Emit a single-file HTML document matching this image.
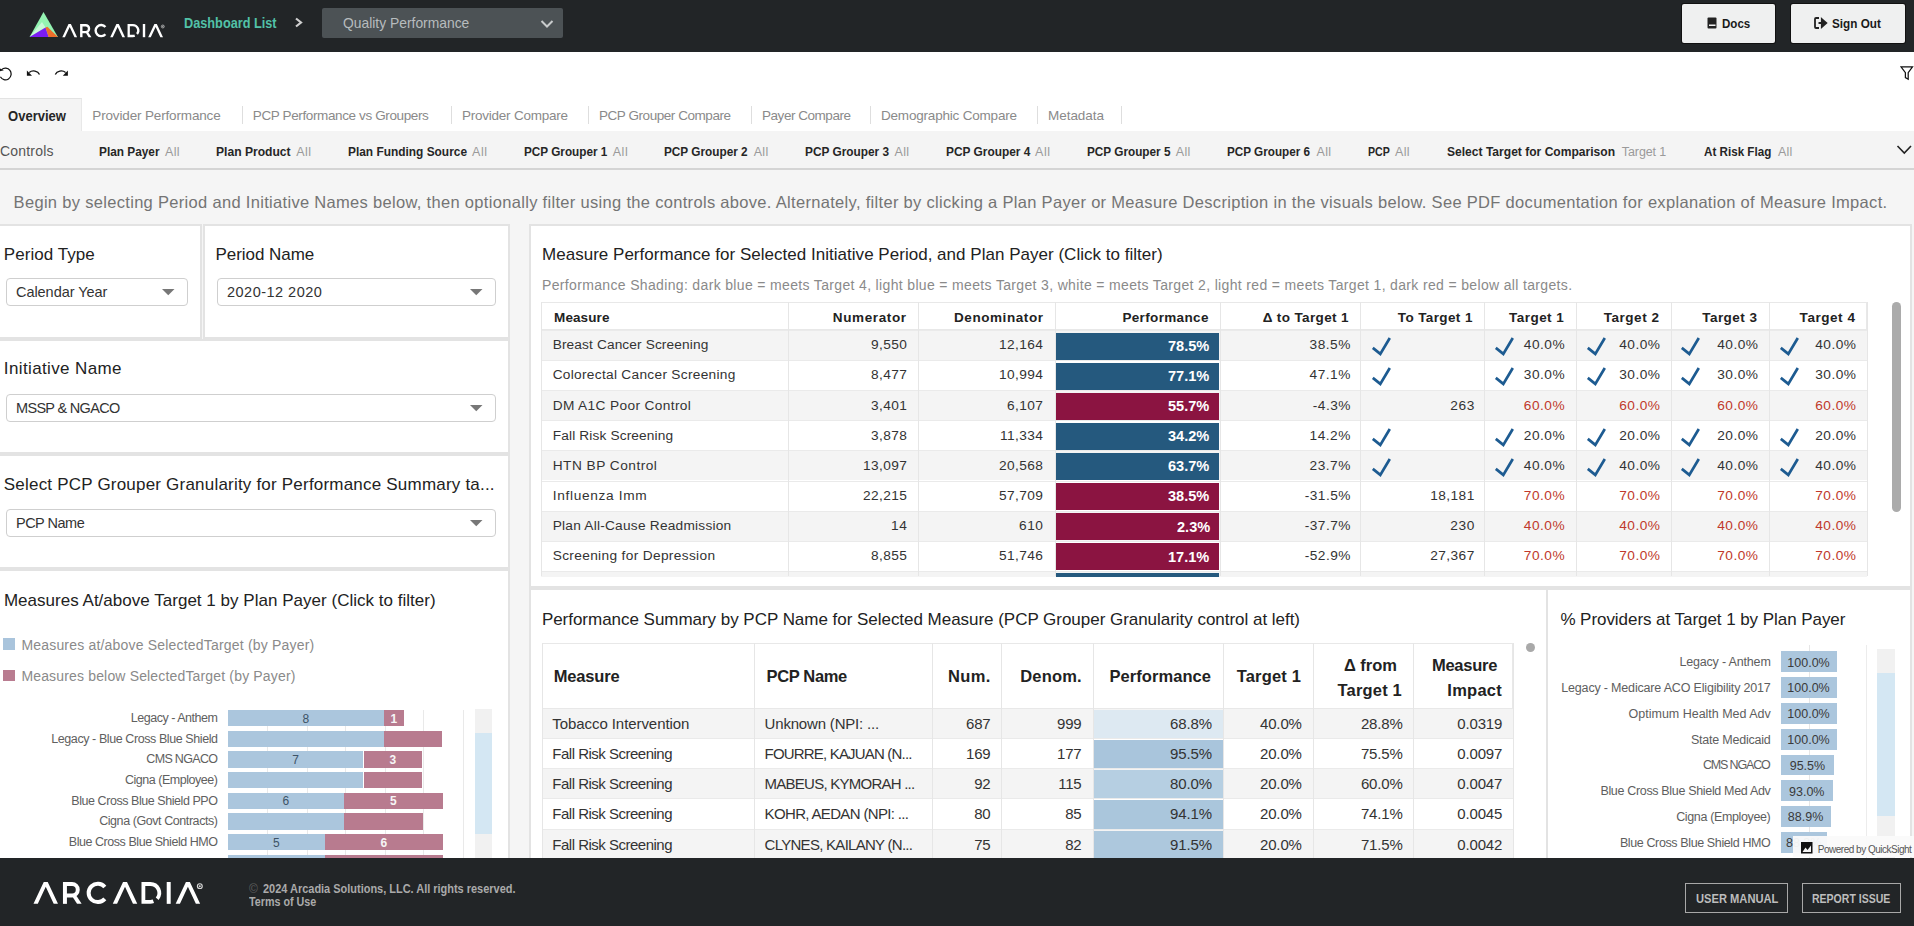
<!DOCTYPE html><html><head><meta charset="utf-8"><style>
html,body{margin:0;padding:0;width:1914px;height:926px;overflow:hidden;background:#f4f4f4;position:relative;font-family:"Liberation Sans",sans-serif;}
.t{position:absolute;white-space:nowrap;}
.r{position:absolute;}
</style></head><body>
<div class="r" style="left:0px;top:0px;width:1914px;height:52px;background:#222527;"></div>
<svg class="r" style="left:0;top:0" width="70" height="52"><polygon points="43.5,11.9 29.6,36.9 57.9,36.9" fill="#94f3b2"/><polygon points="42,22 29.6,36.9 45.5,27.5" fill="#c9f9d9"/><polygon points="29.6,36.9 45.5,27.5 48.7,36.9" fill="#7a1cf2"/><polygon points="45.5,27.5 47.4,26.8 57.9,36.9 48.7,36.9" fill="#ee6e2b"/></svg>
<svg class="r" style="left:62px;top:23.5px;overflow:visible" width="104" height="14" viewBox="0 0 104 14"><polygon points="0.3,13.2 6.5,0 8.9,0 15.1,13.2 12.5,13.2 7.7,2.9 2.9,13.2" fill="#fff"/><polygon points="48.199999999999996,13.2 54.4,0 56.8,0 63.0,13.2 60.4,13.2 55.6,2.9 50.8,13.2" fill="#fff"/><polygon points="86.2,13.2 92.4,0 94.80000000000001,0 101.0,13.2 98.4,13.2 93.60000000000001,2.9 88.80000000000001,13.2" fill="#fff"/><rect x="18.1" y="0" width="2.4" height="13.2" fill="#fff"/><path d="M19.3,1.2 H23.6 A3.45,3.45 0 0 1 23.6,8.1 H19.3" fill="none" stroke="#fff" stroke-width="2.4"/><polygon points="23.2,7.8 25.9,7.8 29.4,13.2 26.6,13.2" fill="#fff"/><path d="M43.4,3.0 A5.55,5.55 0 1 0 43.4,10.2" fill="none" stroke="#fff" stroke-width="2.4"/><path d="M66.7,0 V13.2 M66.7,1.2 H70.9 A5.4,5.4 0 0 1 75.04,10.07 M72.75,11.67 A5.4,5.4 0 0 1 70.9,12 H66.7" fill="none" stroke="#fff" stroke-width="2.3"/><rect x="80.8" y="0" width="2.4" height="13.2" fill="#fff"/><circle cx="100.8" cy="2.5" r="1.45" fill="none" stroke="#d8d8d8" stroke-width="0.7"/><circle cx="100.8" cy="2.5" r="0.6" fill="#d8d8d8"/></svg>
<div class="t" style="left:184.00px;top:15.20px;font-size:15px;line-height:15px;color:#52c2a8;transform-origin:0 0;transform:scaleX(0.8481);font-weight:bold;">Dashboard List</div>
<svg class="r" style="left:294px;top:17px" width="10" height="11"><path d="M2,1.5 L7,5.5 L2,9.5" fill="none" stroke="#d0d0d0" stroke-width="2.2"/></svg>
<div class="r" style="left:322px;top:8px;width:241px;height:30px;background:#4c5255;border-radius:2px;"></div>
<div class="t" style="left:342.50px;top:15.40px;font-size:15px;line-height:15px;color:#b7bcbe;transform-origin:0 0;transform:scaleX(0.9238);">Quality Performance</div>
<svg class="r" style="left:540px;top:19px" width="14" height="10"><path d="M1.5,2 L7,7.5 L12.5,2" fill="none" stroke="#c8cbcc" stroke-width="2"/></svg>
<div class="r" style="left:1682px;top:4px;width:93px;height:39px;background:#eff0f0;border-radius:2px;box-shadow:0 0 0 1px #111;"></div>
<svg class="r" style="left:1707px;top:17px" width="10" height="12"><rect x="0.5" y="0.5" width="9" height="11" rx="1" fill="#222"/><rect x="2" y="7.5" width="6.5" height="1.5" fill="#f2f2f2"/></svg>
<div class="t" style="left:1721.80px;top:16.57px;font-size:13.5px;line-height:13.5px;color:#1a1a1a;transform-origin:0 0;transform:scaleX(0.8572);font-weight:bold;">Docs</div>
<div class="r" style="left:1791px;top:4px;width:114px;height:39px;background:#eff0f0;border-radius:2px;box-shadow:0 0 0 1px #111;"></div>
<svg class="r" style="left:1814px;top:17px" width="14" height="12"><path d="M5,1 H2 Q1,1 1,2 V10 Q1,11 2,11 H5" fill="none" stroke="#222" stroke-width="1.8"/><path d="M4.5,6 H9 M8,2.5 L12,6 L8,9.5 Z" fill="#222" stroke="#222" stroke-width="2.2"/></svg>
<div class="t" style="left:1831.60px;top:16.57px;font-size:13.5px;line-height:13.5px;color:#1a1a1a;transform-origin:0 0;transform:scaleX(0.8677);font-weight:bold;">Sign Out</div>
<div class="r" style="left:0px;top:52px;width:1914px;height:46px;background:#fff;"></div>
<svg class="r" style="left:0;top:0" width="80" height="90"><path d="M1.6,69.6 A5.7,5.9 0 1 1 0.4,76.8" fill="none" stroke="#111" stroke-width="1.25"/><polygon points="-0.5,68.2 3.9,70.2 -0.5,71.4" fill="#111"/><path d="M39.5,74.6 A6.4,5.6 0 0 0 29.2,72.4" fill="none" stroke="#111" stroke-width="1.3"/><polygon points="26.9,70.6 26.9,75.7 32,75.7" fill="#111"/><path d="M55.3,74.6 A6.4,5.6 0 0 1 65.6,72.4" fill="none" stroke="#111" stroke-width="1.3"/><polygon points="67.9,70.6 67.9,75.7 62.8,75.7" fill="#111"/></svg>
<svg class="r" style="left:1900px;top:66px" width="14" height="15"><path d="M1,0.8 H12.5 L8.2,6.6 V13.2 L5.4,11.6 V6.6 Z" fill="none" stroke="#111" stroke-width="1.25"/></svg>
<div class="r" style="left:0px;top:98px;width:1914px;height:33px;background:#fff;"></div>
<div class="r" style="left:0px;top:98px;width:82px;height:33px;background:#f4f4f4;border-top:1px solid #e3e3e3;border-right:1px solid #e8e8e8;box-sizing:border-box;"></div>
<div class="t" style="left:7.50px;top:108.65px;font-size:14px;line-height:14px;color:#262626;transform-origin:0 0;transform:scaleX(0.9316);font-weight:bold;">Overview</div>
<div class="t" style="left:92.30px;top:109.07px;font-size:13.5px;line-height:13.5px;color:#8a8a8a;letter-spacing:-0.153px;">Provider Performance</div>
<div class="r" style="left:242px;top:106px;width:1px;height:18px;background:#dedede;"></div>
<div class="t" style="left:252.80px;top:109.07px;font-size:13.5px;line-height:13.5px;color:#8a8a8a;letter-spacing:-0.378px;">PCP Performance vs Groupers</div>
<div class="r" style="left:451px;top:106px;width:1px;height:18px;background:#dedede;"></div>
<div class="t" style="left:462.00px;top:109.07px;font-size:13.5px;line-height:13.5px;color:#8a8a8a;letter-spacing:-0.236px;">Provider Compare</div>
<div class="r" style="left:588px;top:106px;width:1px;height:18px;background:#dedede;"></div>
<div class="t" style="left:599.00px;top:109.07px;font-size:13.5px;line-height:13.5px;color:#8a8a8a;letter-spacing:-0.448px;">PCP Grouper Compare</div>
<div class="r" style="left:751px;top:106px;width:1px;height:18px;background:#dedede;"></div>
<div class="t" style="left:762.00px;top:109.07px;font-size:13.5px;line-height:13.5px;color:#8a8a8a;letter-spacing:-0.462px;">Payer Compare</div>
<div class="r" style="left:870px;top:106px;width:1px;height:18px;background:#dedede;"></div>
<div class="t" style="left:881.00px;top:109.07px;font-size:13.5px;line-height:13.5px;color:#8a8a8a;letter-spacing:-0.198px;">Demographic Compare</div>
<div class="r" style="left:1037px;top:106px;width:1px;height:18px;background:#dedede;"></div>
<div class="t" style="left:1048.00px;top:109.07px;font-size:13.5px;line-height:13.5px;color:#8a8a8a;letter-spacing:-0.041px;">Metadata</div>
<div class="r" style="left:1121px;top:106px;width:1px;height:18px;background:#dedede;"></div>
<div class="r" style="left:0px;top:131px;width:1914px;height:37px;background:#f4f4f4;"></div>
<div class="r" style="left:0px;top:168px;width:1914px;height:2px;background:#d4d4d4;"></div>
<div class="t" style="left:0.00px;top:144.15px;font-size:14px;line-height:14px;color:#555;letter-spacing:0.195px;">Controls</div>
<div class="t" style="left:99.00px;top:144.70px;font-size:13px;line-height:13px;color:#262626;transform-origin:0 0;transform:scaleX(0.9100);font-weight:bold;">Plan Payer</div>
<div class="t" style="left:165.00px;top:145.72px;font-size:12.5px;line-height:12.5px;color:#9a9a9a;letter-spacing:0.354px;">All</div>
<div class="t" style="left:216.40px;top:144.70px;font-size:13px;line-height:13px;color:#262626;transform-origin:0 0;transform:scaleX(0.9304);font-weight:bold;">Plan Product</div>
<div class="t" style="left:296.30px;top:145.72px;font-size:12.5px;line-height:12.5px;color:#9a9a9a;letter-spacing:0.404px;">All</div>
<div class="t" style="left:347.80px;top:144.70px;font-size:13px;line-height:13px;color:#262626;transform-origin:0 0;transform:scaleX(0.9153);font-weight:bold;">Plan Funding Source</div>
<div class="t" style="left:472.00px;top:145.72px;font-size:12.5px;line-height:12.5px;color:#9a9a9a;letter-spacing:0.554px;">All</div>
<div class="t" style="left:523.70px;top:144.70px;font-size:13px;line-height:13px;color:#262626;transform-origin:0 0;transform:scaleX(0.9031);font-weight:bold;">PCP Grouper 1</div>
<div class="t" style="left:612.70px;top:145.72px;font-size:12.5px;line-height:12.5px;color:#9a9a9a;letter-spacing:0.554px;">All</div>
<div class="t" style="left:664.40px;top:144.70px;font-size:13px;line-height:13px;color:#262626;transform-origin:0 0;transform:scaleX(0.9064);font-weight:bold;">PCP Grouper 2</div>
<div class="t" style="left:753.70px;top:145.72px;font-size:12.5px;line-height:12.5px;color:#9a9a9a;letter-spacing:0.304px;">All</div>
<div class="t" style="left:804.90px;top:144.70px;font-size:13px;line-height:13px;color:#262626;transform-origin:0 0;transform:scaleX(0.9107);font-weight:bold;">PCP Grouper 3</div>
<div class="t" style="left:894.60px;top:145.72px;font-size:12.5px;line-height:12.5px;color:#9a9a9a;letter-spacing:0.304px;">All</div>
<div class="t" style="left:945.70px;top:144.70px;font-size:13px;line-height:13px;color:#262626;transform-origin:0 0;transform:scaleX(0.9140);font-weight:bold;">PCP Grouper 4</div>
<div class="t" style="left:1035.00px;top:145.72px;font-size:12.5px;line-height:12.5px;color:#9a9a9a;letter-spacing:0.554px;">All</div>
<div class="t" style="left:1086.50px;top:144.70px;font-size:13px;line-height:13px;color:#262626;transform-origin:0 0;transform:scaleX(0.9053);font-weight:bold;">PCP Grouper 5</div>
<div class="t" style="left:1175.80px;top:145.72px;font-size:12.5px;line-height:12.5px;color:#9a9a9a;letter-spacing:0.304px;">All</div>
<div class="t" style="left:1227.00px;top:144.70px;font-size:13px;line-height:13px;color:#262626;transform-origin:0 0;transform:scaleX(0.8999);font-weight:bold;">PCP Grouper 6</div>
<div class="t" style="left:1316.50px;top:145.72px;font-size:12.5px;line-height:12.5px;color:#9a9a9a;letter-spacing:0.304px;">All</div>
<div class="t" style="left:1367.60px;top:144.70px;font-size:13px;line-height:13px;color:#262626;transform-origin:0 0;transform:scaleX(0.8155);font-weight:bold;">PCP</div>
<div class="t" style="left:1395.00px;top:145.72px;font-size:12.5px;line-height:12.5px;color:#9a9a9a;letter-spacing:0.304px;">All</div>
<div class="t" style="left:1447.00px;top:144.70px;font-size:13px;line-height:13px;color:#262626;transform-origin:0 0;transform:scaleX(0.9278);font-weight:bold;">Select Target for Comparison</div>
<div class="t" style="left:1621.80px;top:145.72px;font-size:12.5px;line-height:12.5px;color:#9a9a9a;letter-spacing:-0.095px;">Target 1</div>
<div class="t" style="left:1704.40px;top:144.70px;font-size:13px;line-height:13px;color:#262626;transform-origin:0 0;transform:scaleX(0.8958);font-weight:bold;">At Risk Flag</div>
<div class="t" style="left:1778.00px;top:145.72px;font-size:12.5px;line-height:12.5px;color:#9a9a9a;letter-spacing:0.254px;">All</div>
<svg class="r" style="left:1896px;top:144px" width="17" height="12"><path d="M1.5,2 L8.3,9 L15,2" fill="none" stroke="#222" stroke-width="1.6"/></svg>
<div class="r" style="left:0px;top:170px;width:1914px;height:688px;background:#f5f5f5;"></div>
<div class="t" style="left:13.60px;top:193.53px;font-size:16.5px;line-height:16.5px;color:#747474;letter-spacing:0.311px;">Begin by selecting Period and Initiative Names below, then optionally filter using the controls above. Alternately, filter by clicking a Plan Payer or Measure Description in the visuals below. See PDF documentation for explanation of Measure Impact.</div>
<div class="r" style="left:-2px;top:224px;width:204px;height:115px;background:#fff;border:2px solid #e3e3e3;box-sizing:border-box;"></div>
<div class="r" style="left:202.5px;top:224px;width:307.5px;height:115px;background:#fff;border:2px solid #e3e3e3;box-sizing:border-box;"></div>
<div class="t" style="left:3.80px;top:245.91px;font-size:17px;line-height:17px;color:#222;letter-spacing:0.058px;">Period Type</div>
<div class="r" style="left:6px;top:278px;width:182px;height:28px;background:#fff;border:1.5px solid #cfcfcf;border-radius:4px;box-sizing:border-box;"></div>
<div class="t" style="left:16.00px;top:285.03px;font-size:14.5px;line-height:14.5px;color:#333;letter-spacing:-0.051px;">Calendar Year</div>
<svg class="r" style="left:162px;top:289px" width="13" height="7"><path d="M0,0 H12.5 L6.25,6.2 Z" fill="#777"/></svg>
<div class="t" style="left:215.50px;top:245.91px;font-size:17px;line-height:17px;color:#222;letter-spacing:-0.041px;">Period Name</div>
<div class="r" style="left:217px;top:278px;width:279px;height:28px;background:#fff;border:1.5px solid #cfcfcf;border-radius:4px;box-sizing:border-box;"></div>
<div class="t" style="left:227.00px;top:285.03px;font-size:14.5px;line-height:14.5px;color:#333;letter-spacing:0.482px;">2020-12 2020</div>
<svg class="r" style="left:470px;top:289px" width="13" height="7"><path d="M0,0 H12.5 L6.25,6.2 Z" fill="#777"/></svg>
<div class="r" style="left:-2px;top:339px;width:512px;height:115px;background:#fff;border:2px solid #e3e3e3;box-sizing:border-box;"></div>
<div class="t" style="left:3.80px;top:360.41px;font-size:17px;line-height:17px;color:#222;letter-spacing:0.376px;">Initiative Name</div>
<div class="r" style="left:6px;top:393.5px;width:490px;height:28.0px;background:#fff;border:1.5px solid #cfcfcf;border-radius:4px;box-sizing:border-box;"></div>
<div class="t" style="left:16.00px;top:400.53px;font-size:14.5px;line-height:14.5px;color:#333;letter-spacing:-0.685px;">MSSP &amp; NGACO</div>
<svg class="r" style="left:470px;top:404.5px" width="13" height="7"><path d="M0,0 H12.5 L6.25,6.2 Z" fill="#777"/></svg>
<div class="r" style="left:-2px;top:454px;width:512px;height:115px;background:#fff;border:2px solid #e3e3e3;box-sizing:border-box;"></div>
<div class="t" style="left:3.80px;top:475.61px;font-size:17px;line-height:17px;color:#222;letter-spacing:0.205px;">Select PCP Grouper Granularity for Performance Summary ta...</div>
<div class="r" style="left:6px;top:508.5px;width:490px;height:28.0px;background:#fff;border:1.5px solid #cfcfcf;border-radius:4px;box-sizing:border-box;"></div>
<div class="t" style="left:16.00px;top:515.53px;font-size:14.5px;line-height:14.5px;color:#333;letter-spacing:-0.509px;">PCP Name</div>
<svg class="r" style="left:470px;top:519.5px" width="13" height="7"><path d="M0,0 H12.5 L6.25,6.2 Z" fill="#777"/></svg>
<div class="r" style="left:-2px;top:569px;width:512px;height:331px;background:#fff;border:2px solid #e3e3e3;box-sizing:border-box;"></div>
<div class="t" style="left:3.90px;top:591.91px;font-size:17px;line-height:17px;color:#222;letter-spacing:0.022px;">Measures At/above Target 1 by Plan Payer (Click to filter)</div>
<div class="r" style="left:3.2px;top:638px;width:11.8px;height:11.5px;background:#a9c4dc;"></div>
<div class="t" style="left:21.40px;top:637.55px;font-size:14px;line-height:14px;color:#8a8a8a;letter-spacing:0.190px;">Measures at/above SelectedTarget (by Payer)</div>
<div class="r" style="left:3.2px;top:669.5px;width:11.8px;height:11.5px;background:#b97c90;"></div>
<div class="t" style="left:21.40px;top:668.65px;font-size:14px;line-height:14px;color:#8a8a8a;letter-spacing:0.162px;">Measures below SelectedTarget (by Payer)</div>
<div class="r" style="left:0;top:700px;width:510px;height:158px;overflow:hidden">
<div class="r" style="left:266.6px;top:10px;width:1px;height:160px;background:#e9e9e9"></div>
<div class="r" style="left:306.8px;top:10px;width:1px;height:160px;background:#e9e9e9"></div>
<div class="r" style="left:345px;top:10px;width:1px;height:160px;background:#e9e9e9"></div>
<div class="r" style="left:384.5px;top:10px;width:1px;height:160px;background:#e9e9e9"></div>
<div class="r" style="left:422.7px;top:10px;width:1px;height:160px;background:#e9e9e9"></div>
<div class="r" style="left:462.6px;top:10px;width:1px;height:160px;background:#e9e9e9"></div>
<div class="r" style="left:227.7px;top:10.00px;width:156.2px;height:16.4px;background:#abc6dd"></div>
<div class="r" style="left:383.9px;top:10.00px;width:20.1px;height:16.4px;background:#b87b8f"></div>
<div class="r" style="left:227.7px;top:30.67px;width:156.2px;height:16.4px;background:#abc6dd"></div>
<div class="r" style="left:383.9px;top:30.67px;width:58.6px;height:16.4px;background:#b87b8f"></div>
<div class="r" style="left:227.7px;top:51.34px;width:135.8px;height:16.4px;background:#abc6dd"></div>
<div class="r" style="left:363.5px;top:51.34px;width:58.5px;height:16.4px;background:#b87b8f"></div>
<div class="r" style="left:227.7px;top:72.01px;width:135.8px;height:16.4px;background:#abc6dd"></div>
<div class="r" style="left:363.5px;top:72.01px;width:58.5px;height:16.4px;background:#b87b8f"></div>
<div class="r" style="left:227.7px;top:92.68px;width:116.3px;height:16.4px;background:#abc6dd"></div>
<div class="r" style="left:344px;top:92.68px;width:98.5px;height:16.4px;background:#b87b8f"></div>
<div class="r" style="left:227.7px;top:113.35px;width:116.3px;height:16.4px;background:#abc6dd"></div>
<div class="r" style="left:344px;top:113.35px;width:78.7px;height:16.4px;background:#b87b8f"></div>
<div class="r" style="left:227.7px;top:134.02px;width:97.3px;height:16.4px;background:#abc6dd"></div>
<div class="r" style="left:325px;top:134.02px;width:117.5px;height:16.4px;background:#b87b8f"></div>
<div class="r" style="left:227.7px;top:154.69px;width:97.3px;height:16.4px;background:#abc6dd"></div>
<div class="r" style="left:325px;top:154.69px;width:117.5px;height:16.4px;background:#b87b8f"></div>
</div>
<div class="t" style="left:130.76px;top:712.02px;font-size:12.5px;line-height:12.5px;color:#606060;letter-spacing:-0.469px;">Legacy - Anthem</div>
<div class="t" style="left:302.46px;top:712.64px;font-size:12px;line-height:12px;color:#3d5366;">8</div>
<div class="t" style="left:390.61px;top:712.64px;font-size:12px;line-height:12px;color:#f6f6f6;font-weight:bold;">1</div>
<div class="t" style="left:51.28px;top:732.69px;font-size:12.5px;line-height:12.5px;color:#606060;letter-spacing:-0.418px;">Legacy - Blue Cross Blue Shield</div>
<div class="t" style="left:146.31px;top:753.36px;font-size:12.5px;line-height:12.5px;color:#606060;letter-spacing:-0.675px;">CMS NGACO</div>
<div class="t" style="left:292.26px;top:753.98px;font-size:12px;line-height:12px;color:#3d5366;">7</div>
<div class="t" style="left:389.41px;top:753.98px;font-size:12px;line-height:12px;color:#f6f6f6;font-weight:bold;">3</div>
<div class="t" style="left:124.96px;top:774.03px;font-size:12.5px;line-height:12.5px;color:#606060;letter-spacing:-0.467px;">Cigna (Employee)</div>
<div class="t" style="left:71.32px;top:794.70px;font-size:12.5px;line-height:12.5px;color:#606060;letter-spacing:-0.442px;">Blue Cross Blue Shield PPO</div>
<div class="t" style="left:282.51px;top:795.32px;font-size:12px;line-height:12px;color:#3d5366;">6</div>
<div class="t" style="left:389.91px;top:795.32px;font-size:12px;line-height:12px;color:#f6f6f6;font-weight:bold;">5</div>
<div class="t" style="left:99.13px;top:815.37px;font-size:12.5px;line-height:12.5px;color:#606060;letter-spacing:-0.426px;">Cigna (Govt Contracts)</div>
<div class="t" style="left:68.75px;top:836.04px;font-size:12.5px;line-height:12.5px;color:#606060;letter-spacing:-0.449px;">Blue Cross Blue Shield HMO</div>
<div class="t" style="left:273.01px;top:836.66px;font-size:12px;line-height:12px;color:#3d5366;">5</div>
<div class="t" style="left:380.41px;top:836.66px;font-size:12px;line-height:12px;color:#f6f6f6;font-weight:bold;">6</div>
<div class="t" style="left:50.64px;top:856.71px;font-size:12.5px;line-height:12.5px;color:#606060;letter-spacing:-0.434px;">Blue Cross Blue Shield Med Adv</div>
<div class="r" style="left:474.6px;top:709px;width:17.099999999999966px;height:149px;background:#f1f1f1;"></div>
<div class="r" style="left:474.6px;top:733px;width:17.099999999999966px;height:101px;background:#d4e7f3;"></div>
<div class="r" style="left:529px;top:224px;width:1383px;height:364px;background:#fff;border:2px solid #e3e3e3;box-sizing:border-box;"></div>
<div class="t" style="left:542.00px;top:245.81px;font-size:17px;line-height:17px;color:#222;letter-spacing:0.021px;">Measure Performance for Selected Initiative Period, and Plan Payer (Click to filter)</div>
<div class="t" style="left:542.00px;top:278.35px;font-size:14px;line-height:14px;color:#8a8a8a;letter-spacing:0.342px;">Performance Shading: dark blue = meets Target 4, light blue = meets Target 3, white = meets Target 2, light red = meets Target 1, dark red = below all targets.</div>
<div class="r" style="left:0;top:0;width:1914px;height:577px;overflow:hidden">
<div class="r" style="left:541.4px;top:302.2px;width:1325.4px;height:27.80000000000001px;background:#fff;border:1px solid #e8e8e8;box-sizing:border-box;"></div>
<div class="r" style="left:541.4px;top:330.0px;width:1325.4px;height:30.100000000000023px;background:#f4f4f4;"></div>
<div class="r" style="left:541.4px;top:330.0px;width:1325.4px;height:1.0px;background:#eaeaea;"></div>
<div class="r" style="left:1055.8px;top:332.5px;width:163.70000000000005px;height:27.30000000000001px;background:#25597e;"></div>
<div class="r" style="left:541.4px;top:360.1px;width:1325.4px;height:30.100000000000023px;background:#fff;"></div>
<div class="r" style="left:541.4px;top:360.1px;width:1325.4px;height:1.0px;background:#eaeaea;"></div>
<div class="r" style="left:1055.8px;top:362.6px;width:163.70000000000005px;height:27.30000000000001px;background:#25597e;"></div>
<div class="r" style="left:541.4px;top:390.2px;width:1325.4px;height:30.100000000000023px;background:#f4f4f4;"></div>
<div class="r" style="left:541.4px;top:390.2px;width:1325.4px;height:1.0px;background:#eaeaea;"></div>
<div class="r" style="left:1055.8px;top:392.7px;width:163.70000000000005px;height:27.30000000000001px;background:#8b1441;"></div>
<div class="r" style="left:541.4px;top:420.3px;width:1325.4px;height:30.100000000000023px;background:#fff;"></div>
<div class="r" style="left:541.4px;top:420.3px;width:1325.4px;height:1.0px;background:#eaeaea;"></div>
<div class="r" style="left:1055.8px;top:422.8px;width:163.70000000000005px;height:27.30000000000001px;background:#25597e;"></div>
<div class="r" style="left:541.4px;top:450.4px;width:1325.4px;height:30.100000000000023px;background:#f4f4f4;"></div>
<div class="r" style="left:541.4px;top:450.4px;width:1325.4px;height:1.0px;background:#eaeaea;"></div>
<div class="r" style="left:1055.8px;top:452.9px;width:163.70000000000005px;height:27.30000000000001px;background:#25597e;"></div>
<div class="r" style="left:541.4px;top:480.5px;width:1325.4px;height:30.100000000000023px;background:#fff;"></div>
<div class="r" style="left:541.4px;top:480.5px;width:1325.4px;height:1.0px;background:#eaeaea;"></div>
<div class="r" style="left:1055.8px;top:483.0px;width:163.70000000000005px;height:27.30000000000001px;background:#8b1441;"></div>
<div class="r" style="left:541.4px;top:510.6px;width:1325.4px;height:30.100000000000023px;background:#f4f4f4;"></div>
<div class="r" style="left:541.4px;top:510.6px;width:1325.4px;height:1.0px;background:#eaeaea;"></div>
<div class="r" style="left:1055.8px;top:513.1px;width:163.70000000000005px;height:27.300000000000068px;background:#8b1441;"></div>
<div class="r" style="left:541.4px;top:540.7px;width:1325.4px;height:30.100000000000023px;background:#fff;"></div>
<div class="r" style="left:541.4px;top:540.7px;width:1325.4px;height:1.0px;background:#eaeaea;"></div>
<div class="r" style="left:1055.8px;top:543.2px;width:163.70000000000005px;height:27.300000000000068px;background:#8b1441;"></div>
<div class="r" style="left:541.4px;top:570.8px;width:1325.4px;height:30.100000000000023px;background:#f4f4f4;"></div>
<div class="r" style="left:541.4px;top:570.8px;width:1325.4px;height:1.0px;background:#eaeaea;"></div>
<div class="r" style="left:1055.8px;top:573.3px;width:163.70000000000005px;height:27.300000000000068px;background:#25597e;"></div>
<div class="r" style="left:541.4px;top:302.2px;width:1.0px;height:274.3px;background:#e6e6e6;"></div>
<div class="r" style="left:787.7px;top:302.2px;width:1.0px;height:274.3px;background:#e6e6e6;"></div>
<div class="r" style="left:917.6px;top:302.2px;width:1.0px;height:274.3px;background:#e6e6e6;"></div>
<div class="r" style="left:1054.7px;top:302.2px;width:1.0px;height:274.3px;background:#e6e6e6;"></div>
<div class="r" style="left:1219.8px;top:302.2px;width:1.0px;height:274.3px;background:#e6e6e6;"></div>
<div class="r" style="left:1360.4px;top:302.2px;width:1.0px;height:274.3px;background:#e6e6e6;"></div>
<div class="r" style="left:1484.3px;top:302.2px;width:1.0px;height:274.3px;background:#e6e6e6;"></div>
<div class="r" style="left:1575.7px;top:302.2px;width:1.0px;height:274.3px;background:#e6e6e6;"></div>
<div class="r" style="left:1670.9px;top:302.2px;width:1.0px;height:274.3px;background:#e6e6e6;"></div>
<div class="r" style="left:1769.4px;top:302.2px;width:1.0px;height:274.3px;background:#e6e6e6;"></div>
<div class="r" style="left:1866.8px;top:302.2px;width:1.0px;height:274.3px;background:#e6e6e6;"></div>
</div>
<div class="t" style="left:554.10px;top:310.67px;font-size:13.5px;line-height:13.5px;color:#222;letter-spacing:0.087px;font-weight:bold;">Measure</div>
<div class="t" style="left:832.80px;top:310.67px;font-size:13.5px;line-height:13.5px;color:#222;letter-spacing:0.617px;font-weight:bold;">Numerator</div>
<div class="t" style="left:954.00px;top:310.67px;font-size:13.5px;line-height:13.5px;color:#222;letter-spacing:0.574px;font-weight:bold;">Denominator</div>
<div class="t" style="left:1122.40px;top:310.67px;font-size:13.5px;line-height:13.5px;color:#222;letter-spacing:0.346px;font-weight:bold;">Performance</div>
<div class="t" style="left:1262.70px;top:310.67px;font-size:13.5px;line-height:13.5px;color:#222;letter-spacing:0.361px;font-weight:bold;">Δ to Target 1</div>
<div class="t" style="left:1397.80px;top:310.67px;font-size:13.5px;line-height:13.5px;color:#222;letter-spacing:0.384px;font-weight:bold;">To Target 1</div>
<div class="t" style="left:1509.00px;top:310.67px;font-size:13.5px;line-height:13.5px;color:#222;letter-spacing:0.469px;font-weight:bold;">Target 1</div>
<div class="t" style="left:1603.70px;top:310.67px;font-size:13.5px;line-height:13.5px;color:#222;letter-spacing:0.541px;font-weight:bold;">Target 2</div>
<div class="t" style="left:1702.20px;top:310.67px;font-size:13.5px;line-height:13.5px;color:#222;letter-spacing:0.469px;font-weight:bold;">Target 3</div>
<div class="t" style="left:1799.60px;top:310.67px;font-size:13.5px;line-height:13.5px;color:#222;letter-spacing:0.541px;font-weight:bold;">Target 4</div>
<div class="t" style="left:552.70px;top:338.30px;font-size:13.7px;line-height:13.7px;color:#333;letter-spacing:0.120px;">Breast Cancer Screening</div>
<div class="t" style="left:871.00px;top:338.30px;font-size:13.7px;line-height:13.7px;color:#333;letter-spacing:0.429px;">9,550</div>
<div class="t" style="left:999.00px;top:338.30px;font-size:13.7px;line-height:13.7px;color:#333;letter-spacing:0.419px;">12,164</div>
<div class="t" style="left:1168.49px;top:337.98px;font-size:15.5px;line-height:15.5px;color:#fff;transform-origin:0 0;transform:scaleX(0.9400);font-weight:bold;">78.5%</div>
<div class="t" style="left:1309.61px;top:338.30px;font-size:13.7px;line-height:13.7px;color:#333;letter-spacing:0.486px;">38.5%</div>
<svg class="r" style="left:1369.5px;top:335.3px" width="24" height="22"><path d="M2.8,12.9 L10.3,18.9 L19.8,3" fill="none" stroke="#1d5b91" stroke-width="2.7" stroke-linecap="butt" stroke-linejoin="miter"/></svg>
<div class="t" style="left:1523.80px;top:338.30px;font-size:13.7px;line-height:13.7px;color:#333;letter-spacing:0.489px;">40.0%</div>
<svg class="r" style="left:1493.0px;top:335.3px" width="24" height="22"><path d="M2.8,12.9 L10.3,18.9 L19.8,3" fill="none" stroke="#1d5b91" stroke-width="2.7" stroke-linecap="butt" stroke-linejoin="miter"/></svg>
<div class="t" style="left:1619.20px;top:338.30px;font-size:13.7px;line-height:13.7px;color:#333;letter-spacing:0.489px;">40.0%</div>
<svg class="r" style="left:1584.5px;top:335.3px" width="24" height="22"><path d="M2.8,12.9 L10.3,18.9 L19.8,3" fill="none" stroke="#1d5b91" stroke-width="2.7" stroke-linecap="butt" stroke-linejoin="miter"/></svg>
<div class="t" style="left:1717.20px;top:338.30px;font-size:13.7px;line-height:13.7px;color:#333;letter-spacing:0.489px;">40.0%</div>
<svg class="r" style="left:1679.3px;top:335.3px" width="24" height="22"><path d="M2.8,12.9 L10.3,18.9 L19.8,3" fill="none" stroke="#1d5b91" stroke-width="2.7" stroke-linecap="butt" stroke-linejoin="miter"/></svg>
<div class="t" style="left:1815.20px;top:338.30px;font-size:13.7px;line-height:13.7px;color:#333;letter-spacing:0.489px;">40.0%</div>
<svg class="r" style="left:1777.5px;top:335.3px" width="24" height="22"><path d="M2.8,12.9 L10.3,18.9 L19.8,3" fill="none" stroke="#1d5b91" stroke-width="2.7" stroke-linecap="butt" stroke-linejoin="miter"/></svg>
<div class="t" style="left:552.70px;top:368.40px;font-size:13.7px;line-height:13.7px;color:#333;letter-spacing:0.294px;">Colorectal Cancer Screening</div>
<div class="t" style="left:871.00px;top:368.40px;font-size:13.7px;line-height:13.7px;color:#333;letter-spacing:0.429px;">8,477</div>
<div class="t" style="left:999.00px;top:368.40px;font-size:13.7px;line-height:13.7px;color:#333;letter-spacing:0.419px;">10,994</div>
<div class="t" style="left:1168.49px;top:368.08px;font-size:15.5px;line-height:15.5px;color:#fff;transform-origin:0 0;transform:scaleX(0.9400);font-weight:bold;">77.1%</div>
<div class="t" style="left:1309.61px;top:368.40px;font-size:13.7px;line-height:13.7px;color:#333;letter-spacing:0.486px;">47.1%</div>
<svg class="r" style="left:1369.5px;top:365.4px" width="24" height="22"><path d="M2.8,12.9 L10.3,18.9 L19.8,3" fill="none" stroke="#1d5b91" stroke-width="2.7" stroke-linecap="butt" stroke-linejoin="miter"/></svg>
<div class="t" style="left:1523.80px;top:368.40px;font-size:13.7px;line-height:13.7px;color:#333;letter-spacing:0.489px;">30.0%</div>
<svg class="r" style="left:1493.0px;top:365.4px" width="24" height="22"><path d="M2.8,12.9 L10.3,18.9 L19.8,3" fill="none" stroke="#1d5b91" stroke-width="2.7" stroke-linecap="butt" stroke-linejoin="miter"/></svg>
<div class="t" style="left:1619.20px;top:368.40px;font-size:13.7px;line-height:13.7px;color:#333;letter-spacing:0.489px;">30.0%</div>
<svg class="r" style="left:1584.5px;top:365.4px" width="24" height="22"><path d="M2.8,12.9 L10.3,18.9 L19.8,3" fill="none" stroke="#1d5b91" stroke-width="2.7" stroke-linecap="butt" stroke-linejoin="miter"/></svg>
<div class="t" style="left:1717.20px;top:368.40px;font-size:13.7px;line-height:13.7px;color:#333;letter-spacing:0.489px;">30.0%</div>
<svg class="r" style="left:1679.3px;top:365.4px" width="24" height="22"><path d="M2.8,12.9 L10.3,18.9 L19.8,3" fill="none" stroke="#1d5b91" stroke-width="2.7" stroke-linecap="butt" stroke-linejoin="miter"/></svg>
<div class="t" style="left:1815.20px;top:368.40px;font-size:13.7px;line-height:13.7px;color:#333;letter-spacing:0.489px;">30.0%</div>
<svg class="r" style="left:1777.5px;top:365.4px" width="24" height="22"><path d="M2.8,12.9 L10.3,18.9 L19.8,3" fill="none" stroke="#1d5b91" stroke-width="2.7" stroke-linecap="butt" stroke-linejoin="miter"/></svg>
<div class="t" style="left:552.70px;top:398.50px;font-size:13.7px;line-height:13.7px;color:#333;letter-spacing:0.365px;">DM A1C Poor Control</div>
<div class="t" style="left:871.00px;top:398.50px;font-size:13.7px;line-height:13.7px;color:#333;letter-spacing:0.429px;">3,401</div>
<div class="t" style="left:1007.00px;top:398.50px;font-size:13.7px;line-height:13.7px;color:#333;letter-spacing:0.429px;">6,107</div>
<div class="t" style="left:1168.49px;top:398.18px;font-size:15.5px;line-height:15.5px;color:#fff;transform-origin:0 0;transform:scaleX(0.9400);font-weight:bold;">55.7%</div>
<div class="t" style="left:1312.82px;top:398.50px;font-size:13.7px;line-height:13.7px;color:#333;letter-spacing:0.447px;">-4.3%</div>
<div class="t" style="left:1450.30px;top:398.50px;font-size:13.7px;line-height:13.7px;color:#333;letter-spacing:0.571px;">263</div>
<div class="t" style="left:1523.80px;top:398.50px;font-size:13.7px;line-height:13.7px;color:#c0392b;letter-spacing:0.489px;">60.0%</div>
<div class="t" style="left:1619.20px;top:398.50px;font-size:13.7px;line-height:13.7px;color:#c0392b;letter-spacing:0.489px;">60.0%</div>
<div class="t" style="left:1717.20px;top:398.50px;font-size:13.7px;line-height:13.7px;color:#c0392b;letter-spacing:0.489px;">60.0%</div>
<div class="t" style="left:1815.20px;top:398.50px;font-size:13.7px;line-height:13.7px;color:#c0392b;letter-spacing:0.489px;">60.0%</div>
<div class="t" style="left:552.70px;top:428.60px;font-size:13.7px;line-height:13.7px;color:#333;letter-spacing:0.143px;">Fall Risk Screening</div>
<div class="t" style="left:871.00px;top:428.60px;font-size:13.7px;line-height:13.7px;color:#333;letter-spacing:0.429px;">3,878</div>
<div class="t" style="left:1000.07px;top:428.60px;font-size:13.7px;line-height:13.7px;color:#333;letter-spacing:0.409px;">11,334</div>
<div class="t" style="left:1168.49px;top:428.28px;font-size:15.5px;line-height:15.5px;color:#fff;transform-origin:0 0;transform:scaleX(0.9400);font-weight:bold;">34.2%</div>
<div class="t" style="left:1309.61px;top:428.60px;font-size:13.7px;line-height:13.7px;color:#333;letter-spacing:0.486px;">14.2%</div>
<svg class="r" style="left:1369.5px;top:425.6px" width="24" height="22"><path d="M2.8,12.9 L10.3,18.9 L19.8,3" fill="none" stroke="#1d5b91" stroke-width="2.7" stroke-linecap="butt" stroke-linejoin="miter"/></svg>
<div class="t" style="left:1523.80px;top:428.60px;font-size:13.7px;line-height:13.7px;color:#333;letter-spacing:0.489px;">20.0%</div>
<svg class="r" style="left:1493.0px;top:425.6px" width="24" height="22"><path d="M2.8,12.9 L10.3,18.9 L19.8,3" fill="none" stroke="#1d5b91" stroke-width="2.7" stroke-linecap="butt" stroke-linejoin="miter"/></svg>
<div class="t" style="left:1619.20px;top:428.60px;font-size:13.7px;line-height:13.7px;color:#333;letter-spacing:0.489px;">20.0%</div>
<svg class="r" style="left:1584.5px;top:425.6px" width="24" height="22"><path d="M2.8,12.9 L10.3,18.9 L19.8,3" fill="none" stroke="#1d5b91" stroke-width="2.7" stroke-linecap="butt" stroke-linejoin="miter"/></svg>
<div class="t" style="left:1717.20px;top:428.60px;font-size:13.7px;line-height:13.7px;color:#333;letter-spacing:0.489px;">20.0%</div>
<svg class="r" style="left:1679.3px;top:425.6px" width="24" height="22"><path d="M2.8,12.9 L10.3,18.9 L19.8,3" fill="none" stroke="#1d5b91" stroke-width="2.7" stroke-linecap="butt" stroke-linejoin="miter"/></svg>
<div class="t" style="left:1815.20px;top:428.60px;font-size:13.7px;line-height:13.7px;color:#333;letter-spacing:0.489px;">20.0%</div>
<svg class="r" style="left:1777.5px;top:425.6px" width="24" height="22"><path d="M2.8,12.9 L10.3,18.9 L19.8,3" fill="none" stroke="#1d5b91" stroke-width="2.7" stroke-linecap="butt" stroke-linejoin="miter"/></svg>
<div class="t" style="left:552.70px;top:458.70px;font-size:13.7px;line-height:13.7px;color:#333;letter-spacing:0.487px;">HTN BP Control</div>
<div class="t" style="left:863.00px;top:458.70px;font-size:13.7px;line-height:13.7px;color:#333;letter-spacing:0.419px;">13,097</div>
<div class="t" style="left:999.00px;top:458.70px;font-size:13.7px;line-height:13.7px;color:#333;letter-spacing:0.419px;">20,568</div>
<div class="t" style="left:1168.49px;top:458.38px;font-size:15.5px;line-height:15.5px;color:#fff;transform-origin:0 0;transform:scaleX(0.9400);font-weight:bold;">63.7%</div>
<div class="t" style="left:1309.61px;top:458.70px;font-size:13.7px;line-height:13.7px;color:#333;letter-spacing:0.486px;">23.7%</div>
<svg class="r" style="left:1369.5px;top:455.7px" width="24" height="22"><path d="M2.8,12.9 L10.3,18.9 L19.8,3" fill="none" stroke="#1d5b91" stroke-width="2.7" stroke-linecap="butt" stroke-linejoin="miter"/></svg>
<div class="t" style="left:1523.80px;top:458.70px;font-size:13.7px;line-height:13.7px;color:#333;letter-spacing:0.489px;">40.0%</div>
<svg class="r" style="left:1493.0px;top:455.7px" width="24" height="22"><path d="M2.8,12.9 L10.3,18.9 L19.8,3" fill="none" stroke="#1d5b91" stroke-width="2.7" stroke-linecap="butt" stroke-linejoin="miter"/></svg>
<div class="t" style="left:1619.20px;top:458.70px;font-size:13.7px;line-height:13.7px;color:#333;letter-spacing:0.489px;">40.0%</div>
<svg class="r" style="left:1584.5px;top:455.7px" width="24" height="22"><path d="M2.8,12.9 L10.3,18.9 L19.8,3" fill="none" stroke="#1d5b91" stroke-width="2.7" stroke-linecap="butt" stroke-linejoin="miter"/></svg>
<div class="t" style="left:1717.20px;top:458.70px;font-size:13.7px;line-height:13.7px;color:#333;letter-spacing:0.489px;">40.0%</div>
<svg class="r" style="left:1679.3px;top:455.7px" width="24" height="22"><path d="M2.8,12.9 L10.3,18.9 L19.8,3" fill="none" stroke="#1d5b91" stroke-width="2.7" stroke-linecap="butt" stroke-linejoin="miter"/></svg>
<div class="t" style="left:1815.20px;top:458.70px;font-size:13.7px;line-height:13.7px;color:#333;letter-spacing:0.489px;">40.0%</div>
<svg class="r" style="left:1777.5px;top:455.7px" width="24" height="22"><path d="M2.8,12.9 L10.3,18.9 L19.8,3" fill="none" stroke="#1d5b91" stroke-width="2.7" stroke-linecap="butt" stroke-linejoin="miter"/></svg>
<div class="t" style="left:552.70px;top:488.80px;font-size:13.7px;line-height:13.7px;color:#333;letter-spacing:0.672px;">Influenza Imm</div>
<div class="t" style="left:863.00px;top:488.80px;font-size:13.7px;line-height:13.7px;color:#333;letter-spacing:0.419px;">22,215</div>
<div class="t" style="left:999.00px;top:488.80px;font-size:13.7px;line-height:13.7px;color:#333;letter-spacing:0.419px;">57,709</div>
<div class="t" style="left:1168.49px;top:488.48px;font-size:15.5px;line-height:15.5px;color:#fff;transform-origin:0 0;transform:scaleX(0.9400);font-weight:bold;">38.5%</div>
<div class="t" style="left:1304.82px;top:488.80px;font-size:13.7px;line-height:13.7px;color:#333;letter-spacing:0.434px;">-31.5%</div>
<div class="t" style="left:1430.30px;top:488.80px;font-size:13.7px;line-height:13.7px;color:#333;letter-spacing:0.419px;">18,181</div>
<div class="t" style="left:1523.80px;top:488.80px;font-size:13.7px;line-height:13.7px;color:#c0392b;letter-spacing:0.489px;">70.0%</div>
<div class="t" style="left:1619.20px;top:488.80px;font-size:13.7px;line-height:13.7px;color:#c0392b;letter-spacing:0.489px;">70.0%</div>
<div class="t" style="left:1717.20px;top:488.80px;font-size:13.7px;line-height:13.7px;color:#c0392b;letter-spacing:0.489px;">70.0%</div>
<div class="t" style="left:1815.20px;top:488.80px;font-size:13.7px;line-height:13.7px;color:#c0392b;letter-spacing:0.489px;">70.0%</div>
<div class="t" style="left:552.70px;top:518.90px;font-size:13.7px;line-height:13.7px;color:#333;letter-spacing:0.234px;">Plan All-Cause Readmission</div>
<div class="t" style="left:891.00px;top:518.90px;font-size:13.7px;line-height:13.7px;color:#333;letter-spacing:0.762px;">14</div>
<div class="t" style="left:1019.00px;top:518.90px;font-size:13.7px;line-height:13.7px;color:#333;letter-spacing:0.571px;">610</div>
<div class="t" style="left:1176.59px;top:518.58px;font-size:15.5px;line-height:15.5px;color:#fff;transform-origin:0 0;transform:scaleX(0.9400);font-weight:bold;">2.3%</div>
<div class="t" style="left:1304.82px;top:518.90px;font-size:13.7px;line-height:13.7px;color:#333;letter-spacing:0.434px;">-37.7%</div>
<div class="t" style="left:1450.30px;top:518.90px;font-size:13.7px;line-height:13.7px;color:#333;letter-spacing:0.571px;">230</div>
<div class="t" style="left:1523.80px;top:518.90px;font-size:13.7px;line-height:13.7px;color:#c0392b;letter-spacing:0.489px;">40.0%</div>
<div class="t" style="left:1619.20px;top:518.90px;font-size:13.7px;line-height:13.7px;color:#c0392b;letter-spacing:0.489px;">40.0%</div>
<div class="t" style="left:1717.20px;top:518.90px;font-size:13.7px;line-height:13.7px;color:#c0392b;letter-spacing:0.489px;">40.0%</div>
<div class="t" style="left:1815.20px;top:518.90px;font-size:13.7px;line-height:13.7px;color:#c0392b;letter-spacing:0.489px;">40.0%</div>
<div class="t" style="left:552.70px;top:549.00px;font-size:13.7px;line-height:13.7px;color:#333;letter-spacing:0.344px;">Screening for Depression</div>
<div class="t" style="left:871.00px;top:549.00px;font-size:13.7px;line-height:13.7px;color:#333;letter-spacing:0.429px;">8,855</div>
<div class="t" style="left:999.00px;top:549.00px;font-size:13.7px;line-height:13.7px;color:#333;letter-spacing:0.419px;">51,746</div>
<div class="t" style="left:1168.49px;top:548.68px;font-size:15.5px;line-height:15.5px;color:#fff;transform-origin:0 0;transform:scaleX(0.9400);font-weight:bold;">17.1%</div>
<div class="t" style="left:1304.82px;top:549.00px;font-size:13.7px;line-height:13.7px;color:#333;letter-spacing:0.434px;">-52.9%</div>
<div class="t" style="left:1430.30px;top:549.00px;font-size:13.7px;line-height:13.7px;color:#333;letter-spacing:0.419px;">27,367</div>
<div class="t" style="left:1523.80px;top:549.00px;font-size:13.7px;line-height:13.7px;color:#c0392b;letter-spacing:0.489px;">70.0%</div>
<div class="t" style="left:1619.20px;top:549.00px;font-size:13.7px;line-height:13.7px;color:#c0392b;letter-spacing:0.489px;">70.0%</div>
<div class="t" style="left:1717.20px;top:549.00px;font-size:13.7px;line-height:13.7px;color:#c0392b;letter-spacing:0.489px;">70.0%</div>
<div class="t" style="left:1815.20px;top:549.00px;font-size:13.7px;line-height:13.7px;color:#c0392b;letter-spacing:0.489px;">70.0%</div>
<div class="r" style="left:1891.6px;top:301.6px;width:9.0px;height:210.39999999999998px;background:#ababab;border-radius:5px;"></div>
<div class="r" style="left:529px;top:588px;width:1018.5px;height:312px;background:#fff;border:2px solid #e3e3e3;box-sizing:border-box;"></div>
<div class="t" style="left:541.90px;top:611.01px;font-size:17px;line-height:17px;color:#222;letter-spacing:-0.030px;">Performance Summary by PCP Name for Selected Measure (PCP Grouper Granularity control at left)</div>
<div class="r" style="left:0;top:0;width:1914px;height:858px;overflow:hidden">
<div class="r" style="left:541.9px;top:643.4px;width:971.5000000000001px;height:65.60000000000002px;background:#fff;border:1px solid #e8e8e8;box-sizing:border-box;"></div>
<div class="r" style="left:541.9px;top:709px;width:971.5000000000001px;height:30px;background:#f4f4f4;"></div>
<div class="r" style="left:541.9px;top:738px;width:971.5000000000001px;height:1px;background:#eaeaea;"></div>
<div class="r" style="left:1094.3px;top:710px;width:128.29999999999995px;height:28px;background:#dde9f2;"></div>
<div class="r" style="left:541.9px;top:739px;width:971.5000000000001px;height:30.200000000000045px;background:#fff;"></div>
<div class="r" style="left:541.9px;top:768.2px;width:971.5000000000001px;height:1.0px;background:#eaeaea;"></div>
<div class="r" style="left:1094.3px;top:740px;width:128.29999999999995px;height:28.200000000000045px;background:#a9c5dc;"></div>
<div class="r" style="left:541.9px;top:769.2px;width:971.5000000000001px;height:30.199999999999932px;background:#f4f4f4;"></div>
<div class="r" style="left:541.9px;top:798.4px;width:971.5000000000001px;height:1.0px;background:#eaeaea;"></div>
<div class="r" style="left:1094.3px;top:770.2px;width:128.29999999999995px;height:28.199999999999932px;background:#b6cfe2;"></div>
<div class="r" style="left:541.9px;top:799.4px;width:971.5000000000001px;height:30.200000000000045px;background:#fff;"></div>
<div class="r" style="left:541.9px;top:828.6px;width:971.5000000000001px;height:1.0px;background:#eaeaea;"></div>
<div class="r" style="left:1094.3px;top:800.4px;width:128.29999999999995px;height:28.200000000000045px;background:#aac6dc;"></div>
<div class="r" style="left:541.9px;top:829.6px;width:971.5000000000001px;height:30.399999999999977px;background:#f4f4f4;"></div>
<div class="r" style="left:541.9px;top:859px;width:971.5000000000001px;height:1px;background:#eaeaea;"></div>
<div class="r" style="left:1094.3px;top:830.6px;width:128.29999999999995px;height:28.399999999999977px;background:#adc8dd;"></div>
<div class="r" style="left:541.9px;top:643.4px;width:1.0px;height:214.60000000000002px;background:#e6e6e6;"></div>
<div class="r" style="left:754.3px;top:643.4px;width:1.0px;height:214.60000000000002px;background:#e6e6e6;"></div>
<div class="r" style="left:932.2px;top:643.4px;width:1.0px;height:214.60000000000002px;background:#e6e6e6;"></div>
<div class="r" style="left:1001.4px;top:643.4px;width:1.0px;height:214.60000000000002px;background:#e6e6e6;"></div>
<div class="r" style="left:1093.3px;top:643.4px;width:1.0px;height:214.60000000000002px;background:#e6e6e6;"></div>
<div class="r" style="left:1222.6px;top:643.4px;width:1.0px;height:214.60000000000002px;background:#e6e6e6;"></div>
<div class="r" style="left:1312.6px;top:643.4px;width:1.0px;height:214.60000000000002px;background:#e6e6e6;"></div>
<div class="r" style="left:1413.4px;top:643.4px;width:1.0px;height:214.60000000000002px;background:#e6e6e6;"></div>
<div class="r" style="left:1513.4px;top:643.4px;width:1.0px;height:214.60000000000002px;background:#e6e6e6;"></div>
</div>
<div class="t" style="left:553.80px;top:667.83px;font-size:16.5px;line-height:16.5px;color:#222;letter-spacing:-0.192px;font-weight:bold;">Measure</div>
<div class="t" style="left:766.50px;top:667.83px;font-size:16.5px;line-height:16.5px;color:#222;letter-spacing:-0.336px;font-weight:bold;">PCP Name</div>
<div class="t" style="left:948.00px;top:667.83px;font-size:16.5px;line-height:16.5px;color:#222;letter-spacing:0.383px;font-weight:bold;">Num.</div>
<div class="t" style="left:1020.20px;top:667.83px;font-size:16.5px;line-height:16.5px;color:#222;letter-spacing:0.199px;font-weight:bold;">Denom.</div>
<div class="t" style="left:1109.50px;top:667.83px;font-size:16.5px;line-height:16.5px;color:#222;letter-spacing:0.062px;font-weight:bold;">Performance</div>
<div class="t" style="left:1236.70px;top:667.83px;font-size:16.5px;line-height:16.5px;color:#222;letter-spacing:0.191px;font-weight:bold;">Target 1</div>
<div class="t" style="left:1343.90px;top:656.83px;font-size:16.5px;line-height:16.5px;color:#222;letter-spacing:-0.002px;font-weight:bold;">Δ from</div>
<div class="t" style="left:1337.60px;top:681.93px;font-size:16.5px;line-height:16.5px;color:#222;letter-spacing:0.177px;font-weight:bold;">Target 1</div>
<div class="t" style="left:1431.90px;top:656.83px;font-size:16.5px;line-height:16.5px;color:#222;letter-spacing:-0.242px;font-weight:bold;">Measure</div>
<div class="t" style="left:1447.30px;top:681.93px;font-size:16.5px;line-height:16.5px;color:#222;letter-spacing:0.263px;font-weight:bold;">Impact</div>
<div class="r" style="left:1526.2px;top:642.9px;width:9.0px;height:9.0px;background:#a9a9a9;border-radius:50%;"></div>
<div class="t" style="left:552.30px;top:715.90px;font-size:15px;line-height:15px;color:#333;letter-spacing:-0.070px;">Tobacco Intervention</div>
<div class="t" style="left:764.60px;top:715.90px;font-size:15px;line-height:15px;color:#333;letter-spacing:-0.184px;">Unknown (NPI: ...</div>
<div class="t" style="left:966.05px;top:715.90px;font-size:15px;line-height:15px;color:#333;letter-spacing:-0.188px;">687</div>
<div class="t" style="left:1057.05px;top:715.90px;font-size:15px;line-height:15px;color:#333;letter-spacing:-0.188px;">999</div>
<div class="t" style="left:1170.11px;top:715.90px;font-size:15px;line-height:15px;color:#333;letter-spacing:-0.159px;">68.8%</div>
<div class="t" style="left:1260.01px;top:715.90px;font-size:15px;line-height:15px;color:#333;letter-spacing:-0.159px;">40.0%</div>
<div class="t" style="left:1360.91px;top:715.90px;font-size:15px;line-height:15px;color:#333;letter-spacing:-0.159px;">28.8%</div>
<div class="t" style="left:1457.21px;top:715.90px;font-size:15px;line-height:15px;color:#333;letter-spacing:-0.138px;">0.0319</div>
<div class="t" style="left:552.30px;top:745.90px;font-size:15px;line-height:15px;color:#333;letter-spacing:-0.501px;">Fall Risk Screening</div>
<div class="t" style="left:764.60px;top:745.90px;font-size:15px;line-height:15px;color:#333;letter-spacing:-0.818px;">FOURRE, KAJUAN (N...</div>
<div class="t" style="left:966.05px;top:745.90px;font-size:15px;line-height:15px;color:#333;letter-spacing:-0.188px;">169</div>
<div class="t" style="left:1057.05px;top:745.90px;font-size:15px;line-height:15px;color:#333;letter-spacing:-0.188px;">177</div>
<div class="t" style="left:1170.11px;top:745.90px;font-size:15px;line-height:15px;color:#333;letter-spacing:-0.159px;">95.5%</div>
<div class="t" style="left:1260.01px;top:745.90px;font-size:15px;line-height:15px;color:#333;letter-spacing:-0.159px;">20.0%</div>
<div class="t" style="left:1360.91px;top:745.90px;font-size:15px;line-height:15px;color:#333;letter-spacing:-0.159px;">75.5%</div>
<div class="t" style="left:1457.21px;top:745.90px;font-size:15px;line-height:15px;color:#333;letter-spacing:-0.138px;">0.0097</div>
<div class="t" style="left:552.30px;top:776.10px;font-size:15px;line-height:15px;color:#333;letter-spacing:-0.501px;">Fall Risk Screening</div>
<div class="t" style="left:764.60px;top:776.10px;font-size:15px;line-height:15px;color:#333;letter-spacing:-0.755px;">MABEUS, KYMORAH ...</div>
<div class="t" style="left:974.27px;top:776.10px;font-size:15px;line-height:15px;color:#333;letter-spacing:-0.250px;">92</div>
<div class="t" style="left:1058.14px;top:776.10px;font-size:15px;line-height:15px;color:#333;letter-spacing:-0.179px;">115</div>
<div class="t" style="left:1170.11px;top:776.10px;font-size:15px;line-height:15px;color:#333;letter-spacing:-0.159px;">80.0%</div>
<div class="t" style="left:1260.01px;top:776.10px;font-size:15px;line-height:15px;color:#333;letter-spacing:-0.159px;">20.0%</div>
<div class="t" style="left:1360.91px;top:776.10px;font-size:15px;line-height:15px;color:#333;letter-spacing:-0.159px;">60.0%</div>
<div class="t" style="left:1457.21px;top:776.10px;font-size:15px;line-height:15px;color:#333;letter-spacing:-0.138px;">0.0047</div>
<div class="t" style="left:552.30px;top:806.30px;font-size:15px;line-height:15px;color:#333;letter-spacing:-0.501px;">Fall Risk Screening</div>
<div class="t" style="left:764.60px;top:806.30px;font-size:15px;line-height:15px;color:#333;letter-spacing:-0.657px;">KOHR, AEDAN (NPI: ...</div>
<div class="t" style="left:974.27px;top:806.30px;font-size:15px;line-height:15px;color:#333;letter-spacing:-0.250px;">80</div>
<div class="t" style="left:1065.27px;top:806.30px;font-size:15px;line-height:15px;color:#333;letter-spacing:-0.250px;">85</div>
<div class="t" style="left:1170.11px;top:806.30px;font-size:15px;line-height:15px;color:#333;letter-spacing:-0.159px;">94.1%</div>
<div class="t" style="left:1260.01px;top:806.30px;font-size:15px;line-height:15px;color:#333;letter-spacing:-0.159px;">20.0%</div>
<div class="t" style="left:1360.91px;top:806.30px;font-size:15px;line-height:15px;color:#333;letter-spacing:-0.159px;">74.1%</div>
<div class="t" style="left:1457.21px;top:806.30px;font-size:15px;line-height:15px;color:#333;letter-spacing:-0.138px;">0.0045</div>
<div class="t" style="left:552.30px;top:836.50px;font-size:15px;line-height:15px;color:#333;letter-spacing:-0.501px;">Fall Risk Screening</div>
<div class="t" style="left:764.60px;top:836.50px;font-size:15px;line-height:15px;color:#333;letter-spacing:-0.722px;">CLYNES, KAILANY (N...</div>
<div class="t" style="left:974.27px;top:836.50px;font-size:15px;line-height:15px;color:#333;letter-spacing:-0.250px;">75</div>
<div class="t" style="left:1065.27px;top:836.50px;font-size:15px;line-height:15px;color:#333;letter-spacing:-0.250px;">82</div>
<div class="t" style="left:1170.11px;top:836.50px;font-size:15px;line-height:15px;color:#333;letter-spacing:-0.159px;">91.5%</div>
<div class="t" style="left:1260.01px;top:836.50px;font-size:15px;line-height:15px;color:#333;letter-spacing:-0.159px;">20.0%</div>
<div class="t" style="left:1360.91px;top:836.50px;font-size:15px;line-height:15px;color:#333;letter-spacing:-0.159px;">71.5%</div>
<div class="t" style="left:1457.21px;top:836.50px;font-size:15px;line-height:15px;color:#333;letter-spacing:-0.138px;">0.0042</div>
<div class="r" style="left:1546px;top:588px;width:366px;height:312px;background:#fff;border:2px solid #e3e3e3;box-sizing:border-box;"></div>
<div class="t" style="left:1560.40px;top:611.01px;font-size:17px;line-height:17px;color:#222;letter-spacing:-0.054px;">% Providers at Target 1 by Plan Payer</div>
<div class="r" style="left:0;top:0;width:1914px;height:858px;overflow:hidden">
<div class="r" style="left:1808.7px;top:645px;width:1.0px;height:213px;background:#e6e6e6;"></div>
<div class="r" style="left:1865.7px;top:645px;width:1.0px;height:213px;background:#ececec;"></div>
<div class="r" style="left:1780.5px;top:651.4px;width:56.09999999999991px;height:20.799999999999955px;background:#abc6dd;"></div>
<div class="r" style="left:1780.5px;top:677.1999999999999px;width:56.09999999999991px;height:20.799999999999955px;background:#abc6dd;"></div>
<div class="r" style="left:1780.5px;top:703.0px;width:56.09999999999991px;height:20.799999999999955px;background:#abc6dd;"></div>
<div class="r" style="left:1780.5px;top:728.8px;width:56.09999999999991px;height:20.799999999999955px;background:#abc6dd;"></div>
<div class="r" style="left:1780.5px;top:754.6px;width:53.90000000000009px;height:20.799999999999955px;background:#abc6dd;"></div>
<div class="r" style="left:1780.5px;top:780.4px;width:52.5px;height:20.799999999999955px;background:#abc6dd;"></div>
<div class="r" style="left:1780.5px;top:806.2px;width:50.09999999999991px;height:20.799999999999955px;background:#abc6dd;"></div>
<div class="r" style="left:1780.5px;top:832.0px;width:46.40000000000009px;height:20.799999999999955px;background:#abc6dd;"></div>
<div class="r" style="left:1877.3px;top:649px;width:17.5px;height:209px;background:#f1f1f1;"></div>
<div class="r" style="left:1877.3px;top:673px;width:17.5px;height:142.5px;background:#d4e7f3;"></div>
</div>
<div class="t" style="left:1679.40px;top:656.22px;font-size:12.5px;line-height:12.5px;color:#5e5e5e;letter-spacing:-0.172px;">Legacy - Anthem</div>
<div class="t" style="left:1787.35px;top:656.62px;font-size:12.5px;line-height:12.5px;color:#3a3a3a;">100.0%</div>
<div class="t" style="left:1561.30px;top:682.02px;font-size:12.5px;line-height:12.5px;color:#5e5e5e;letter-spacing:-0.178px;">Legacy - Medicare ACO Eligibility 2017</div>
<div class="t" style="left:1787.35px;top:682.42px;font-size:12.5px;line-height:12.5px;color:#3a3a3a;">100.0%</div>
<div class="t" style="left:1628.60px;top:707.82px;font-size:12.5px;line-height:12.5px;color:#5e5e5e;letter-spacing:-0.011px;">Optimum Health Med Adv</div>
<div class="t" style="left:1787.35px;top:708.22px;font-size:12.5px;line-height:12.5px;color:#3a3a3a;">100.0%</div>
<div class="t" style="left:1691.00px;top:733.62px;font-size:12.5px;line-height:12.5px;color:#5e5e5e;letter-spacing:-0.222px;">State Medicaid</div>
<div class="t" style="left:1787.35px;top:734.02px;font-size:12.5px;line-height:12.5px;color:#3a3a3a;">100.0%</div>
<div class="t" style="left:1703.00px;top:759.42px;font-size:12.5px;line-height:12.5px;color:#5e5e5e;letter-spacing:-1.161px;">CMS NGACO</div>
<div class="t" style="left:1789.73px;top:759.82px;font-size:12.5px;line-height:12.5px;color:#3a3a3a;">95.5%</div>
<div class="t" style="left:1600.40px;top:785.22px;font-size:12.5px;line-height:12.5px;color:#5e5e5e;letter-spacing:-0.330px;">Blue Cross Blue Shield Med Adv</div>
<div class="t" style="left:1789.03px;top:785.62px;font-size:12.5px;line-height:12.5px;color:#3a3a3a;">93.0%</div>
<div class="t" style="left:1676.20px;top:811.02px;font-size:12.5px;line-height:12.5px;color:#5e5e5e;letter-spacing:-0.363px;">Cigna (Employee)</div>
<div class="t" style="left:1787.83px;top:811.42px;font-size:12.5px;line-height:12.5px;color:#3a3a3a;">88.9%</div>
<div class="t" style="left:1619.90px;top:836.82px;font-size:12.5px;line-height:12.5px;color:#5e5e5e;letter-spacing:-0.383px;">Blue Cross Blue Shield HMO</div>
<div class="t" style="left:1785.98px;top:837.22px;font-size:12.5px;line-height:12.5px;color:#3a3a3a;">88.3%</div>
<div class="r" style="left:1793px;top:836px;width:121px;height:21px;background:rgba(250,250,250,.95);"></div>
<svg class="r" style="left:1801px;top:842px" width="12" height="12"><rect x="0" y="0" width="11.5" height="11.5" fill="#111"/><path d="M1.5,10 L4.5,5.5 L6.5,8 L10,3.5 L10,10 Z" fill="#f4f4f4"/></svg>
<div class="t" style="left:1817.80px;top:845.03px;font-size:10px;line-height:10px;color:#555;letter-spacing:-0.497px;">Powered by QuickSight</div>
<div class="r" style="left:0px;top:858px;width:1914px;height:68px;background:#222527;"></div>
<div class="r" style="left:33px;top:881.5px;transform-origin:0 0;transform:scale(1.655)">
<svg class="r" style="left:0px;top:0px;overflow:visible" width="104" height="14" viewBox="0 0 104 14"><polygon points="0.3,13.2 6.5,0 8.9,0 15.1,13.2 12.5,13.2 7.7,2.9 2.9,13.2" fill="#fff"/><polygon points="48.199999999999996,13.2 54.4,0 56.8,0 63.0,13.2 60.4,13.2 55.6,2.9 50.8,13.2" fill="#fff"/><polygon points="86.2,13.2 92.4,0 94.80000000000001,0 101.0,13.2 98.4,13.2 93.60000000000001,2.9 88.80000000000001,13.2" fill="#fff"/><rect x="18.1" y="0" width="2.4" height="13.2" fill="#fff"/><path d="M19.3,1.2 H23.6 A3.45,3.45 0 0 1 23.6,8.1 H19.3" fill="none" stroke="#fff" stroke-width="2.4"/><polygon points="23.2,7.8 25.9,7.8 29.4,13.2 26.6,13.2" fill="#fff"/><path d="M43.4,3.0 A5.55,5.55 0 1 0 43.4,10.2" fill="none" stroke="#fff" stroke-width="2.4"/><path d="M66.7,0 V13.2 M66.7,1.2 H70.9 A5.4,5.4 0 0 1 75.04,10.07 M72.75,11.67 A5.4,5.4 0 0 1 70.9,12 H66.7" fill="none" stroke="#fff" stroke-width="2.3"/><rect x="80.8" y="0" width="2.4" height="13.2" fill="#fff"/><circle cx="100.8" cy="2.5" r="1.45" fill="none" stroke="#d8d8d8" stroke-width="0.7"/><circle cx="100.8" cy="2.5" r="0.6" fill="#d8d8d8"/></svg>
</div>
<div class="t" style="left:249.00px;top:882.84px;font-size:12px;line-height:12px;color:#5e5e5e;">©</div>
<div class="t" style="left:262.50px;top:882.84px;font-size:12px;line-height:12px;color:#aaaaaa;transform-origin:0 0;transform:scaleX(0.9131);font-weight:bold;">2024 Arcadia Solutions, LLC. All rights reserved.</div>
<div class="t" style="left:249.00px;top:896.14px;font-size:12px;line-height:12px;color:#aaaaaa;transform-origin:0 0;transform:scaleX(0.8944);font-weight:bold;">Terms of Use</div>
<div class="r" style="left:1685.3px;top:882.8px;width:102.70000000000005px;height:30.200000000000045px;background:transparent;border:1.6px solid #a8a8a8;box-sizing:border-box;"></div>
<div class="t" style="left:1695.60px;top:892.30px;font-size:13px;line-height:13px;color:#bdbdbd;transform-origin:0 0;transform:scaleX(0.8578);font-weight:bold;">USER MANUAL</div>
<div class="r" style="left:1802px;top:882.8px;width:99px;height:30.200000000000045px;background:transparent;border:1.6px solid #a8a8a8;box-sizing:border-box;"></div>
<div class="t" style="left:1812.40px;top:892.30px;font-size:13px;line-height:13px;color:#bdbdbd;transform-origin:0 0;transform:scaleX(0.8089);font-weight:bold;">REPORT ISSUE</div>
</body></html>
